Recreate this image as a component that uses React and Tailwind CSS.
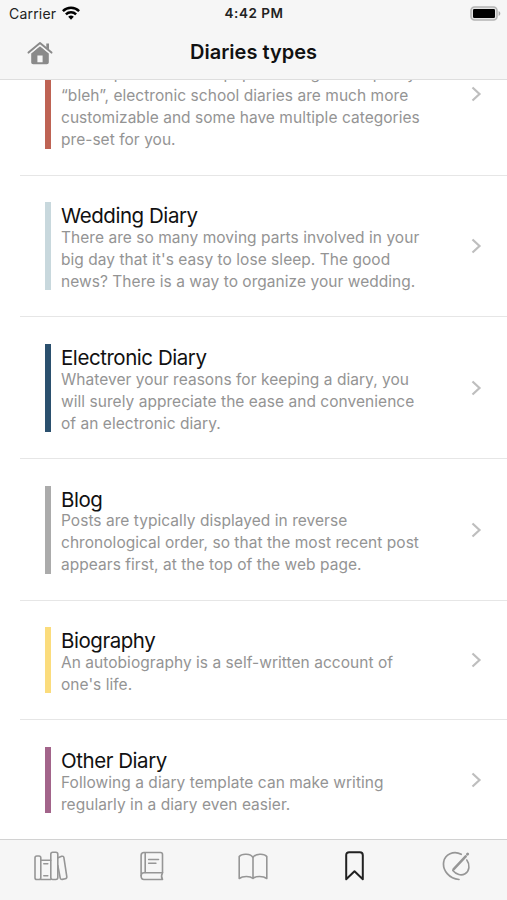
import React, { useState } from 'react';
import clsx from 'clsx';

const diaries = [
  {
    id: 'school',
    lines: [
      'Where printed school papers being rather pretty',
      '“bleh”, electronic school diaries are much more',
      'customizable and some have multiple categories',
      'pre-set for you.',
    ],
    color: 'bg-[#be6354]',
  },
  {
    id: 'wedding',
    title: 'Wedding Diary',
    lines: [
      'There are so many moving parts involved in your',
      "big day that it's easy to lose sleep. The good",
      'news? There is a way to organize your wedding.',
    ],
    color: 'bg-[#c8d8dd]',
  },
  {
    id: 'electronic',
    title: 'Electronic Diary',
    lines: [
      'Whatever your reasons for keeping a diary, you',
      'will surely appreciate the ease and convenience',
      'of an electronic diary.',
    ],
    color: 'bg-[#2b506e]',
  },
  {
    id: 'blog',
    title: 'Blog',
    lines: [
      'Posts are typically displayed in reverse',
      'chronological order, so that the most recent post',
      'appears first, at the top of the web page.',
    ],
    color: 'bg-[#ababab]',
  },
  {
    id: 'biography',
    title: 'Biography',
    lines: ['An autobiography is a self-written account of', "one's life."],
    color: 'bg-[#fbdc7c]',
  },
  {
    id: 'other',
    title: 'Other Diary',
    lines: ['Following a diary template can make writing', 'regularly in a diary even easier.'],
    color: 'bg-[#a2648a]',
  },
];

const WifiIcon = () => (
  <svg width="18" height="14" viewBox="0 0 18 14" fill="none" stroke="#000" strokeWidth="2.5">
    <path d="M.9 5.1a11.6 11.6 0 0 1 16.2 0" />
    <path d="M3.9 8.4a7.3 7.3 0 0 1 10.2 0" />
    <path d="M9 13.7 6.2 10.8a4 4 0 0 1 5.6 0Z" fill="#000" stroke="none" />
  </svg>
);

const BatteryIcon = () => (
  <svg width="31" height="15" viewBox="0 0 31 15">
    <rect x="1" y="1" width="26" height="13" rx="3.5" fill="#e4e4e4" stroke="#b4b4b4" strokeWidth="1.6" />
    <rect x="3" y="3" width="22" height="9" rx="1.2" fill="#000" />
    <path d="M28.6 5v5c1-.4 1.7-1.3 1.7-2.5S29.6 5.4 28.6 5Z" fill="#a5a5a5" />
  </svg>
);

const HomeIcon = () => (
  <svg width="26" height="24" viewBox="0 0 26 24" fill="#8a8a8a">
    <path d="M1.5 11.6 13 2l11.5 9.6" fill="none" stroke="#8a8a8a" strokeWidth="2" strokeLinecap="round" strokeLinejoin="round" />
    <path d="M19.3 2.6H22v6l-2.7-2.2Z" />
    <path fillRule="evenodd" d="M13 5.2 4.2 12.4v8.8c0 1.2.8 2 2 2h13.6c1.2 0 2-.8 2-2v-8.8Zm-2.6 9.2h5.2v6.8h-5.2Z" />
    <path d="M3.4 12.4 13 4.4l9.6 8" fill="none" stroke="#f6f6f6" strokeWidth=".7" />
  </svg>
);

const ShelfIcon = () => (
  <svg width="34" height="30" viewBox="0 0 34 30" fill="none" stroke="currentColor" strokeWidth="1.6" strokeLinejoin="round" strokeLinecap="round">
    <rect x="1" y="5" width="5.8" height="23.5" rx="1.8" />
    <path d="M6.8 9.3h10M6.8 28.5h10M9.8 12.8h4M9.8 24.8h4" />
    <rect x="16.8" y="1.2" width="7" height="27.3" rx="2" />
    <path d="m24 6.8 3.7-1.5c1.1-.3 2 .2 2.2 1.3l2.9 19c.2 1.1-.4 2-1.5 2.2l-3 .6c-1.1.2-1.9-.4-2.1-1.5L23.8 14.5" />
  </svg>
);

const NotebookIcon = () => (
  <svg width="24" height="30" viewBox="0 0 24 30" fill="none" stroke="currentColor" strokeWidth="1.6" strokeLinejoin="round" strokeLinecap="round">
    <path d="M4 1.5h16.5c1.2 0 2 .8 2 2v18.3H4c-1.7 0-2.9 1.2-2.9 3V4.4c0-1.8 1.2-2.9 2.9-2.9Z" />
    <path d="M5.2 1.8v19.7M1.1 24.8c0 2.3 1.2 3.7 2.9 3.7h18.5c-1.3-2.2-1.3-4.5 0-6.7M8.7 8.5h9.8M8.7 12.3h7.2" />
  </svg>
);

const OpenBookIcon = () => (
  <svg width="30" height="27" viewBox="0 0 30 27" fill="none" stroke="currentColor" strokeWidth="1.6" strokeLinejoin="round">
    <path d="M15 4.5C12.8.4 3.7.2 1.2 3.5v22c3.5-2.6 11-2.7 13.8 0 2.8-2.7 10.3-2.6 13.8 0v-22C26.3.2 17.2.4 15 4.5Zm0 0v21" />
  </svg>
);

const BookmarkIcon = () => (
  <svg width="19" height="30" viewBox="0 0 19 30" fill="none" stroke="currentColor" strokeWidth="2" strokeLinejoin="round">
    <path d="M1.2 28.2V4.2c0-1.8 1.1-2.9 2.9-2.9h10.8c1.8 0 2.9 1.1 2.9 2.9v24L9.5 20.2Z" />
  </svg>
);

const ComposeIcon = () => (
  <svg width="29" height="30" viewBox="0 0 29 30" fill="none" stroke="currentColor" strokeLinecap="round">
    <path d="M19.2 3.3C11.5-.8 3 3.5 1.7 10.8.2 19.5 7.5 27.8 17 28.5" strokeWidth="1.7" />
    <path d="M24.8 9c3.5 4.7 2.7 11-1.7 13.7-3.8 2.3-8.8 1-12.3-3.2" strokeWidth="1.6" />
    <path d="m11.5 18.3 12.2-13" strokeWidth="2.5" />
    <path d="m25.4 3.3.3-.3" strokeWidth="2.8" />
  </svg>
);

const tabs = [
  { id: 'shelf', label: 'Library', icon: ShelfIcon },
  { id: 'notebook', label: 'Notebook', icon: NotebookIcon },
  { id: 'reader', label: 'Reader', icon: OpenBookIcon },
  { id: 'types', label: 'Diaries types', icon: BookmarkIcon },
  { id: 'compose', label: 'Compose', icon: ComposeIcon },
];

const Header = () => (
  <header className="h-20 shrink-0 border-b border-[#dedede] bg-[#f6f6f6]">
    <div className="grid h-[26px] grid-cols-3 items-center pl-[7px] pr-[6px] text-[14px] text-[#222]">
      <div className="flex items-center gap-[6px] pl-[2px]">
        <span className="tracking-[0.2px]">Carrier</span>
        <WifiIcon />
      </div>
      <span className="text-center text-[13.5px] font-semibold tracking-[0.5px]">4:42 PM</span>
      <div className="flex justify-end">
        <BatteryIcon />
      </div>
    </div>
    <div className="grid h-[52px] grid-cols-[80px_1fr_80px] items-center">
      <button className="pl-[27px] pt-px" aria-label="Home">
        <HomeIcon />
      </button>
      <h1 className="text-center text-[20px] font-semibold text-[#111]">Diaries types</h1>
    </div>
  </header>
);

const DiaryRow = ({ title, lines, color, last }) => (
  <li
    className={clsx(
      'ml-5 flex shrink-0 items-center justify-between border-[#e6e6e6] pl-[25px] pr-[25px] pt-[26.7px] pb-[26px]',
      !last && 'border-b'
    )}
  >
    <div className="flex gap-[10px]">
      <div className={clsx('w-[6px] shrink-0', color)} />
      <div className="-mb-[2.6px] whitespace-nowrap">
        <h2 className="h-[24.6px] text-[20.5px] leading-[27px] tracking-[-0.45px] text-[#111]">{title}</h2>
        {lines.map((line) => (
          <p key={line} className="text-[15.5px] leading-[22px] tracking-[0.04px] text-[#949494]">
            {line}
          </p>
        ))}
      </div>
    </div>
    <svg width="11" height="16" viewBox="0 0 11 16" fill="none" stroke="#bebebe" strokeWidth="2.2">
      <path d="m1.5 1.5 7 6.5-7 6.5" />
    </svg>
  </li>
);

const App = () => {
  const [activeTab, setActiveTab] = useState('types');

  return (
    <div className="flex h-[900px] w-[507px] flex-col overflow-hidden bg-white font-['Inter','Liberation_Sans',sans-serif]">
      <Header />
      <ul className="flex min-h-0 flex-1 flex-col justify-end overflow-hidden">
        {diaries.map(({ id, ...diary }, i) => (
          <DiaryRow key={id} {...diary} last={i === diaries.length - 1} />
        ))}
      </ul>
      <nav className="grid h-[61px] shrink-0 grid-cols-5 border-t border-[#d2d2d2] bg-[#f6f6f6] pb-[8px]">
        {tabs.map(({ id, label, icon: Icon }) => (
          <button
            key={id}
            aria-label={label}
            onClick={() => setActiveTab(id)}
            className={clsx('flex items-center justify-center', activeTab === id ? 'text-[#222]' : 'text-[#969696]')}
          >
            <Icon />
          </button>
        ))}
      </nav>
    </div>
  );
};

export default App;
